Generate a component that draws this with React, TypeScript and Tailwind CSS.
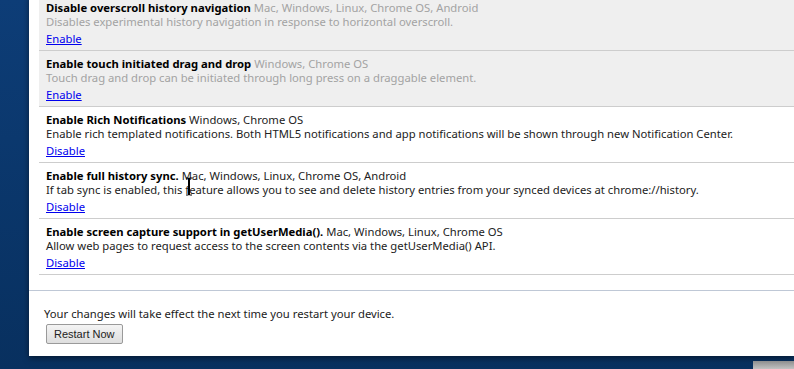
const font = { fontFamily: '"Noto Sans", "Open Sans", sans-serif' }

interface Flag {
  name: string
  platforms: string
  desc: string
  action: string
  unsupported?: boolean
}

const flags: Flag[] = [
  {
    name: 'Disable overscroll history navigation',
    platforms: 'Mac, Windows, Linux, Chrome OS, Android',
    desc: 'Disables experimental history navigation in response to horizontal overscroll.',
    action: 'Enable',
    unsupported: true,
  },
  {
    name: 'Enable touch initiated drag and drop',
    platforms: 'Windows, Chrome OS',
    desc: 'Touch drag and drop can be initiated through long press on a draggable element.',
    action: 'Enable',
    unsupported: true,
  },
  {
    name: 'Enable Rich Notifications',
    platforms: 'Windows, Chrome OS',
    desc: 'Enable rich templated notifications. Both HTML5 notifications and app notifications will be shown through new Notification Center.',
    action: 'Disable',
  },
  {
    name: 'Enable full history sync.',
    platforms: 'Mac, Windows, Linux, Chrome OS, Android',
    desc: 'If tab sync is enabled, this feature allows you to see and delete history entries from your synced devices at chrome://history.',
    action: 'Disable',
  },
  {
    name: 'Enable screen capture support in getUserMedia().',
    platforms: 'Mac, Windows, Linux, Chrome OS',
    desc: 'Allow web pages to request access to the screen contents via the getUserMedia() API.',
    action: 'Disable',
  },
]

function FlagRow({ flag }: { flag: Flag }) {
  const muted = flag.unsupported
  return (
    <div
      className={`h-[56px] border-b border-[#cdcdcd] pl-[7px] pt-[6px] text-[11.25px] leading-[14px] ${
        muted ? 'bg-[#efefef]' : 'bg-white'
      }`}
    >
      <div className="whitespace-nowrap">
        <span className="font-bold text-black">{flag.name}</span>{' '}
        <span className={muted ? 'text-[#a3a3a3]' : 'text-[#222]'}>{flag.platforms}</span>
      </div>
      <div className={`whitespace-nowrap ${muted ? 'text-[#a3a3a3]' : 'text-[#222]'}`}>
        {flag.desc}
      </div>
      <div className="mt-[3px]">
        <a href="#" className="text-[#0000ee] underline">
          {flag.action}
        </a>
      </div>
    </div>
  )
}

export default function App() {
  return (
    <div
      className="relative h-[369px] w-[794px] overflow-hidden bg-gradient-to-b from-[#0d3d77] to-[#08305f]"
      style={font}
    >
      {/* Window */}
      <div className="ml-[29px] h-[361px] bg-white shadow-[0_2px_6px_rgba(0,0,0,0.5)]">
        <div className="-mt-[5px] pl-[10px]">
          {flags.map((f) => (
            <FlagRow key={f.name} flag={f} />
          ))}
        </div>

        {/* Footer */}
        <div className="mt-[15px] border-t border-[#bfc8d6] pl-[15px] pt-[16px] text-[11.25px] leading-[14px] text-[#222]">
          <div>Your changes will take effect the next time you restart your device.</div>
          <button
            className="ml-[2px] mt-[3px] h-[20px] rounded-[2px] border border-[#9a9a9a] bg-gradient-to-b from-[#f4f4f4] to-[#dedede] px-[7px] text-[11px] leading-[18px] text-[#222]"
            style={{ fontFamily: '"Liberation Sans", Arial, sans-serif' }}
          >
            Restart Now
          </button>
        </div>
      </div>

      {/* Shelf edge at bottom right */}
      <div className="absolute bottom-0 right-0 h-[8px] w-[41px] bg-gradient-to-b from-[#8e8e8e] to-[#c2c2c2]" />

      {/* Text cursor */}
      <svg className="absolute left-[185px] top-[177px]" width="8" height="19" viewBox="0 0 8 19">
        <path d="M1 1h2.5v17H1M7 1H4.5v17H7" fill="none" stroke="#000" strokeWidth="1" />
      </svg>
    </div>
  )
}
